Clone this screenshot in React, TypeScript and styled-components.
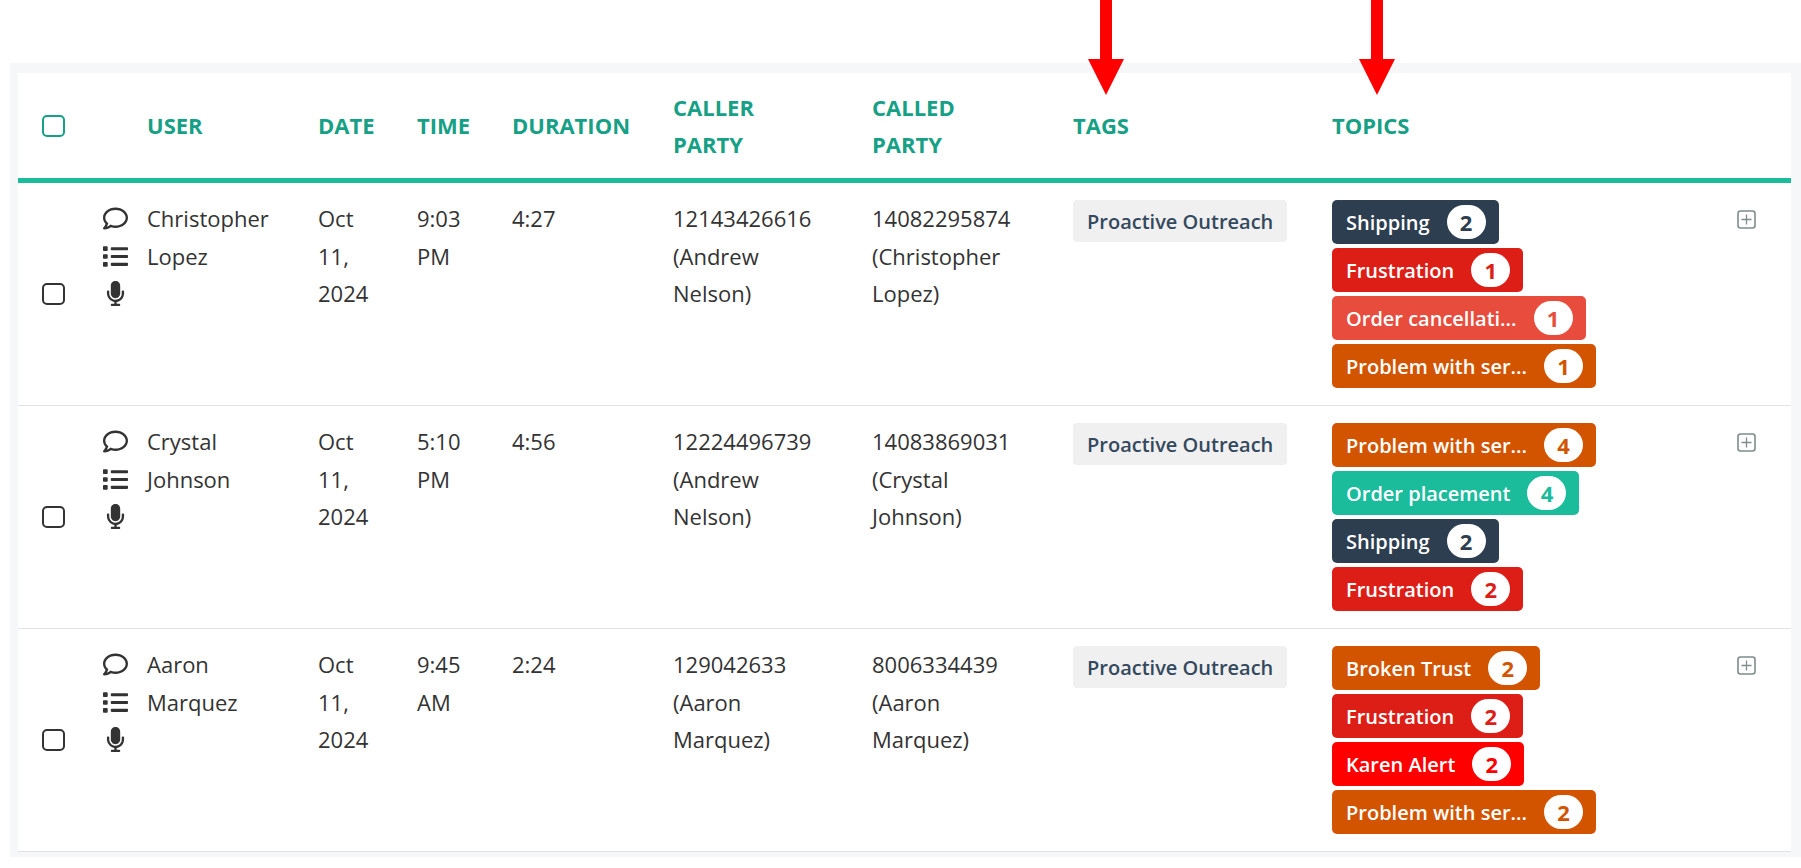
import React from "react";
import styled, { createGlobalStyle } from "styled-components";
import { FaRegComment, FaList, FaMicrophone } from "react-icons/fa";

const Global = createGlobalStyle`
  html, body { margin: 0; padding: 0; background: #fff; }
  body { font-family: "Open Sans", "Liberation Sans", sans-serif; color: #333; }
`;

const COLS = "61px 44px 171px 99px 95px 161px 199px 201px 259px 405px 54px";

const Page = styled.div`
  position: relative;
  width: 1801px;
  height: 868px;
  overflow: hidden;
  padding: 63px 0 0 10px;
  box-sizing: border-box;
`;

const Arrow = styled.svg<{ $left: number }>`
  position: absolute;
  top: 0;
  left: ${(p) => p.$left}px;
  width: 36px;
  height: 95px;
`;

const Panel = styled.div`
  background: #f6f7f9;
  padding: 10px 10px 5px 8px;
`;

const Card = styled.div`
  background: #fff;
`;

const HeadRow = styled.div`
  display: grid;
  grid-template-columns: ${COLS};
  align-items: center;
  height: 105px;
  padding-left: 24px;
  border-bottom: 5px solid #1abc9c;
`;

const HeadCell = styled.div`
  font-size: 22px;
  font-weight: 700;
  line-height: 37px;
  color: #16a085;
  white-space: nowrap;
`;

const Box = styled.span<{ $green?: boolean }>`
  display: block;
  width: 23px;
  height: 22px;
  box-sizing: border-box;
  border: 2px solid ${(p) => (p.$green ? "#16a085" : "#333")};
  border-radius: 5px;
`;

const Row = styled.div`
  display: grid;
  grid-template-columns: ${COLS};
  align-items: start;
  padding: 17px 0 17px 24px;
  border-bottom: 1px solid #e2e2e2;
`;

const CheckCell = styled.div`
  padding-top: 83px;
`;

const IconCell = styled.div`
  display: flex;
  flex-direction: column;
  color: #333;
`;

const IconLine = styled.div`
  height: 37.5px;
  display: flex;
  align-items: center;
  font-size: 25px;
  svg { display: block; }
`;

const TextCell = styled.div`
  font-size: 22px;
  line-height: 37.5px;
  white-space: nowrap;
  color: #333;
`;

const Line = styled.div``;

const Tag = styled.div`
  display: inline-flex;
  align-items: center;
  height: 42px;
  padding: 0 14px;
  background: #f0f0f0;
  border-radius: 4px;
  font-size: 20px;
  font-weight: 600;
  color: #34495e;
  white-space: nowrap;
`;

const Topics = styled.div`
  display: flex;
  flex-direction: column;
  align-items: flex-start;
  gap: 4px;
`;

const Topic = styled.div<{ $bg: string }>`
  display: inline-flex;
  align-items: center;
  gap: 17px;
  height: 44px;
  padding: 0 13px 0 14px;
  box-sizing: border-box;
  background: ${(p) => p.$bg};
  border-radius: 5px;
  color: #fff;
  font-size: 20px;
  font-weight: 600;
  white-space: nowrap;
`;

const Count = styled.span<{ $fg: string }>`
  display: flex;
  align-items: center;
  justify-content: center;
  width: 39px;
  height: 34px;
  border-radius: 17px;
  background: #fff;
  color: ${(p) => p.$fg};
  font-size: 22px;
  font-weight: 700;
`;

const Plus = styled.svg`
  display: block;
  width: 19px;
  height: 19px;
  margin-top: 10px;
`;

const C = {
  navy: "#2c3e50",
  crimson: "#dd1e17",
  coral: "#e74c3c",
  orange: "#d35400",
  teal: "#1abc9c",
  red: "#ff0000",
};

const rows = [
  {
    user: ["Christopher", "Lopez"],
    date: ["Oct", "11,", "2024"],
    time: ["9:03", "PM"],
    duration: "4:27",
    caller: ["12143426616", "(Andrew", "Nelson)"],
    called: ["14082295874", "(Christopher", "Lopez)"],
    topics: [
      ["Shipping", 2, C.navy],
      ["Frustration", 1, C.crimson],
      ["Order cancellati...", 1, C.coral],
      ["Problem with ser...", 1, C.orange],
    ],
  },
  {
    user: ["Crystal", "Johnson"],
    date: ["Oct", "11,", "2024"],
    time: ["5:10", "PM"],
    duration: "4:56",
    caller: ["12224496739", "(Andrew", "Nelson)"],
    called: ["14083869031", "(Crystal", "Johnson)"],
    topics: [
      ["Problem with ser...", 4, C.orange],
      ["Order placement", 4, C.teal],
      ["Shipping", 2, C.navy],
      ["Frustration", 2, C.crimson],
    ],
  },
  {
    user: ["Aaron", "Marquez"],
    date: ["Oct", "11,", "2024"],
    time: ["9:45", "AM"],
    duration: "2:24",
    caller: ["129042633", "(Aaron", "Marquez)"],
    called: ["8006334439", "(Aaron", "Marquez)"],
    topics: [
      ["Broken Trust", 2, C.orange],
      ["Frustration", 2, C.crimson],
      ["Karen Alert", 2, C.red],
      ["Problem with ser...", 2, C.orange],
    ],
  },
] as { user: string[]; date: string[]; time: string[]; duration: string; caller: string[]; called: string[]; topics: [string, number, string][] }[];

const Lines = ({ items }: { items: string[] }) => (
  <TextCell>
    {items.map((t) => (
      <Line key={t}>{t}</Line>
    ))}
  </TextCell>
);

const RedArrow = ({ left }: { left: number }) => (
  <Arrow $left={left} viewBox="0 0 36 95">
    <rect x="12" y="0" width="12" height="60" fill="#ff0000" />
    <polygon points="0,59 36,59 18,95" fill="#ff0000" />
  </Arrow>
);

export default function App() {
  return (
    <Page>
      <Global />
      <RedArrow left={1088} />
      <RedArrow left={1359} />
      <Panel>
        <Card>
          <HeadRow>
            <Box $green />
            <div />
            <HeadCell>USER</HeadCell>
            <HeadCell>DATE</HeadCell>
            <HeadCell>TIME</HeadCell>
            <HeadCell>DURATION</HeadCell>
            <HeadCell>CALLER<br />PARTY</HeadCell>
            <HeadCell>CALLED<br />PARTY</HeadCell>
            <HeadCell>TAGS</HeadCell>
            <HeadCell>TOPICS</HeadCell>
            <div />
          </HeadRow>
          {rows.map((r) => (
            <Row key={r.caller[0]}>
              <CheckCell><Box /></CheckCell>
              <IconCell>
                <IconLine><FaRegComment /></IconLine>
                <IconLine><FaList /></IconLine>
                <IconLine><FaMicrophone /></IconLine>
              </IconCell>
              <Lines items={r.user} />
              <Lines items={r.date} />
              <Lines items={r.time} />
              <Lines items={[r.duration]} />
              <Lines items={r.caller} />
              <Lines items={r.called} />
              <div><Tag>Proactive Outreach</Tag></div>
              <Topics>
                {r.topics.map(([name, n, bg]) => (
                  <Topic key={name} $bg={bg}>
                    {name}
                    <Count $fg={bg}>{n}</Count>
                  </Topic>
                ))}
              </Topics>
              <Plus viewBox="0 0 19 19" fill="none" stroke="#7f8c8d" strokeWidth="1.6">
                <rect x="1" y="1" width="17" height="17" rx="2.5" />
                <path d="M9.5 4.5v10M4.5 9.5h10" strokeWidth="1.3" />
              </Plus>
            </Row>
          ))}
        </Card>
      </Panel>
    </Page>
  );
}
